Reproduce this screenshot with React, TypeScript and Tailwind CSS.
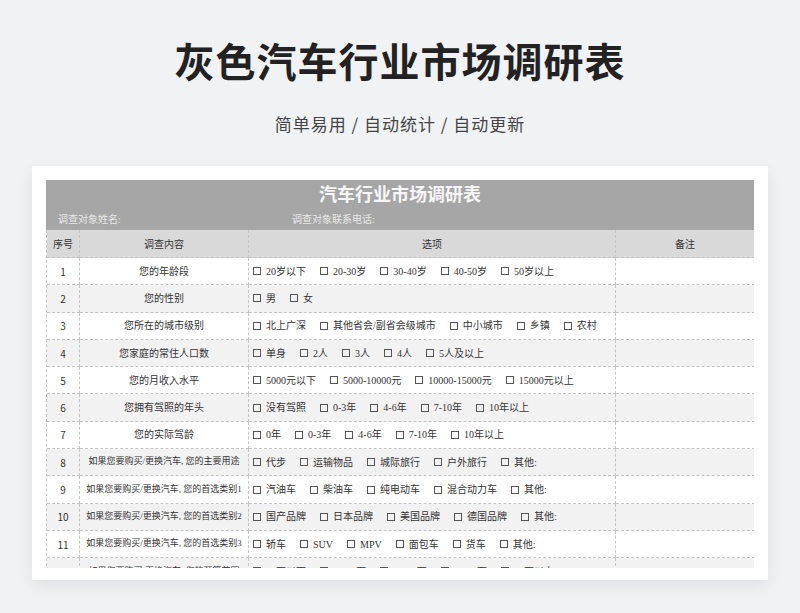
const rows: [string, string[]][] = [
  ['您的年龄段', ['20岁以下', '20-30岁', '30-40岁', '40-50岁', '50岁以上']],
  ['您的性别', ['男', '女']],
  ['您所在的城市级别', ['北上广深', '其他省会/副省会级城市', '中小城市', '乡镇', '农村']],
  ['您家庭的常住人口数', ['单身', '2人', '3人', '4人', '5人及以上']],
  ['您的月收入水平', ['5000元以下', '5000-10000元', '10000-15000元', '15000元以上']],
  ['您拥有驾照的年头', ['没有驾照', '0-3年', '4-6年', '7-10年', '10年以上']],
  ['您的实际驾龄', ['0年', '0-3年', '4-6年', '7-10年', '10年以上']],
  ['如果您要购买/更换汽车, 您的主要用途', ['代步', '运输物品', '城际旅行', '户外旅行', '其他:']],
  ['如果您要购买/更换汽车, 您的首选类别1', ['汽油车', '柴油车', '纯电动车', '混合动力车', '其他:']],
  ['如果您要购买/更换汽车, 您的首选类别2', ['国产品牌', '日本品牌', '美国品牌', '德国品牌', '其他:']],
  ['如果您要购买/更换汽车, 您的首选类别3', ['轿车', 'SUV', 'MPV', '面包车', '货车', '其他:']],
  ['如果您要购买/更换汽车, 您的预算范围', ['10万以下', '10-20万', '20-30万', '30-50万', '50万以上']],
];

const cell = 'border-r border-b border-dashed border-[#c4c4c4] flex items-center overflow-hidden';

export default function App() {
  return (
    <div className="w-[800px] h-[613px] bg-[#f1f2f4] flex flex-col items-center overflow-hidden" style={{ fontFamily: '"Liberation Serif", "Noto Sans CJK SC", serif' }}>
      <h1 className="mt-[36px] text-[40px] leading-[48px] font-bold text-[#222] tracking-[1px]" style={{ fontFamily: '"Noto Sans CJK SC", sans-serif' }}>灰色汽车行业市场调研表</h1>
      <p className="mt-[28px] text-[17px] leading-[24px] text-[#444] tracking-[1px]" style={{ fontFamily: '"Noto Sans CJK SC", sans-serif' }}>简单易用 / 自动统计 / 自动更新</p>
      <div className="mt-[30px] w-[736px] h-[414px] bg-white shadow-[0_6px_14px_rgba(0,0,0,0.08)] px-[14px] pt-[14px]">
        <div className="h-[388px] overflow-hidden">
          <div className="bg-[#a6a6a6] h-[50px] text-[#f7f7f7]">
            <div className="text-center text-[18px] font-bold pt-[2px] leading-[26px]">汽车行业市场调研表</div>
            <div className="flex text-[10px] text-[#e8e8e8] mt-[4px]">
              <span className="pl-[12px] w-[246px]">调查对象姓名:</span>
              <span>调查对象联系电话:</span>
            </div>
          </div>
          <div className="grid grid-cols-[33px_169px_367px_139px] text-[10px] text-[#333] border-l border-dashed border-[#c4c4c4]">
            {['序号', '调查内容', '选项', '备注'].map((h) => (
              <div key={h} className={`${cell} justify-center h-[28px] bg-[#d9d9d9]`} style={{ fontFamily: '"Noto Sans CJK SC", sans-serif' }}>{h}</div>
            ))}
            {rows.map(([q, opts], i) => {
              const bg = i % 2 ? 'bg-[#f2f2f2]' : 'bg-white';
              return [
                <div key={`n${i}`} className={`${cell} ${bg} justify-center h-[27.3px]`} style={{ fontFamily: '"Noto Sans CJK SC", sans-serif' }}>{i + 1}</div>,
                <div key={`q${i}`} className={`${cell} ${bg} justify-center whitespace-nowrap ${q.length > 12 ? 'text-[9px]' : ''}`}>{q}</div>,
                <div key={`o${i}`} className={`${cell} ${bg} pl-[4px] gap-[14px] whitespace-nowrap`}>
                  {opts.map((o) => (
                    <span key={o} className="flex items-center gap-[5px]">
                      <span className="inline-block w-[8px] h-[8px] border border-[#555]" />
                      {o}
                    </span>
                  ))}
                </div>,
                <div key={`b${i}`} className={`${cell} ${bg}`} />,
              ];
            })}
          </div>
        </div>
      </div>
    </div>
  );
}
